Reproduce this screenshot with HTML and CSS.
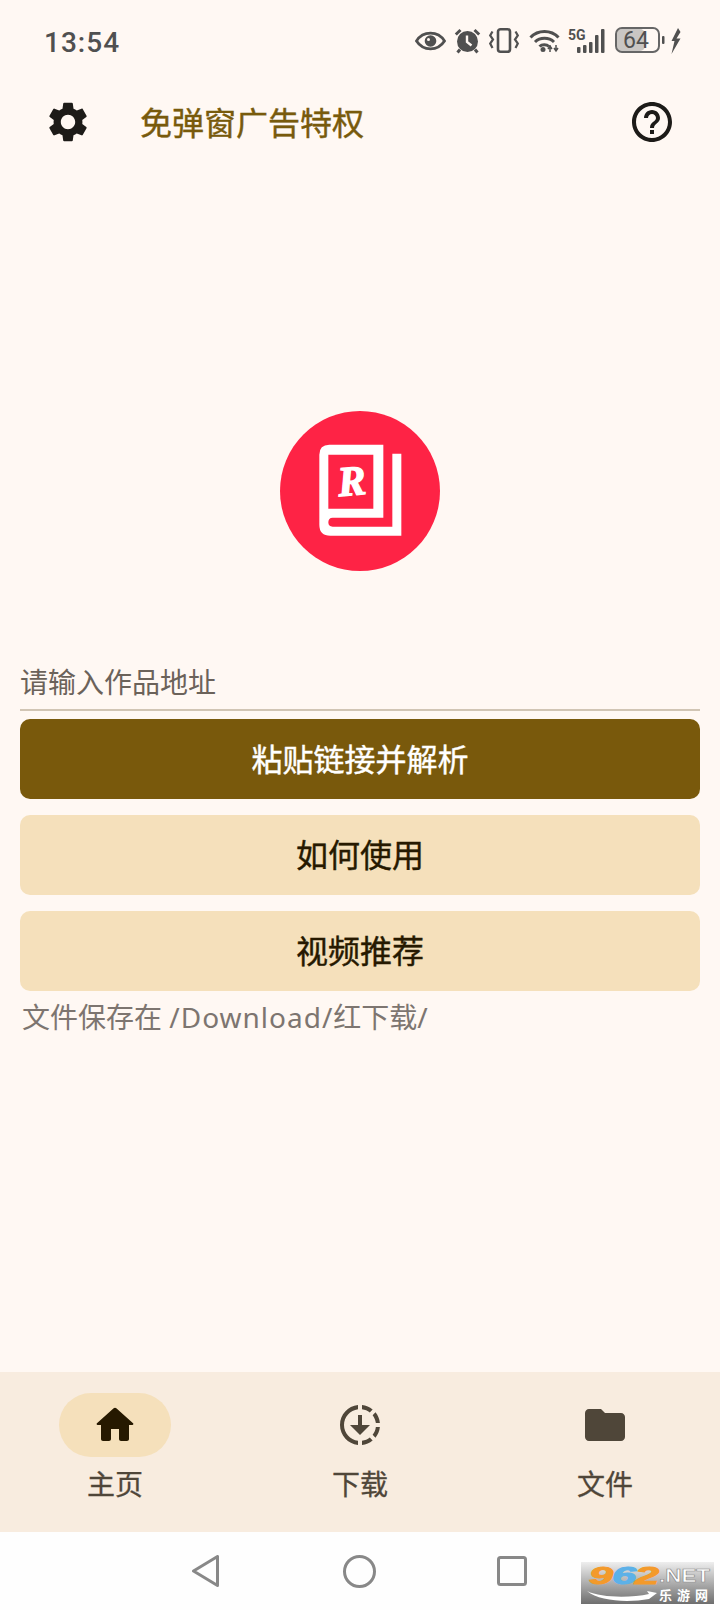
FILE: index.html
```html
<!DOCTYPE html>
<html lang="zh-CN">
<head>
    <meta charset="UTF-8">
    <meta name="viewport" content="width=device-width, initial-scale=1.0">
    <title>免弹窗广告特权</title>
    <link rel="stylesheet" href="styles.css">
</head>
<body>
    <div class="app">
        <div class="status-bar">
            <span class="clock">13:54</span>
            <svg class="status-icons" width="266" height="28" viewBox="0 0 266 28">
                <!-- eye -->
                <g transform="translate(0 5)">
                    <path d="M1.500 9C5 3.500 10 1.200 15.500 1.200S26 3.500 29.500 9C26 14.500 21 16.800 15.500 16.800S5 14.500 1.500 9Z" fill="none" stroke="#505050" stroke-width="2.800"/>
                    <circle cx="15.500" cy="9" r="5.800" fill="#505050"/>
                    <circle cx="13.500" cy="7.500" r="1.500" fill="#fff8f3"/>
                </g>
                <!-- alarm -->
                <g transform="translate(40 2)">
                    <circle cx="12.500" cy="12.500" r="10.500" fill="#505050"/>
                    <path d="M.8 5.500 5.500 1M24.200 5.500 19.500 1M5 20.500 2.500 23.500M20 20.500l2.500 3" stroke="#505050" stroke-width="3" fill="none"/>
                    <path d="M12 6.500v6.500l4.500 3.500" stroke="#fff8f3" stroke-width="2.400" fill="none"/>
                </g>
                <!-- vibrate -->
                <g transform="translate(74 1)">
                    <rect x="9" y="1.300" width="12" height="22.500" rx="2.500" fill="none" stroke="#505050" stroke-width="2.600"/>
                    <path d="M3.500 3.500 1.200 7.500l2.800 4-2.800 4 2.300 4.500M26.500 3.500l2.300 4-2.800 4 2.800 4-2.300 4.500" fill="none" stroke="#505050" stroke-width="2.200"/>
                </g>
                <!-- wifi -->
                <g transform="translate(114 1)">
                    <path d="M1.500 9.500C9 1.500 22 1.500 29.500 9.500M6 14c5-5 14-5 19 0M10.500 18.500c2.500-2.500 7-2.500 9.500 0" fill="none" stroke="#505050" stroke-width="3"/>
                    <circle cx="14" cy="21.500" r="2.500" fill="#505050"/>
                    <path d="M21 17v7M27 17v7M19 21l2-3 2 3M25 20l2 3 2-3" fill="none" stroke="#505050" stroke-width="1.500"/>
                </g>
                <!-- 5G and signal -->
                <g transform="translate(153 2)">
                    <text x="0" y="10.500" class="five-g">5G</text>
                    <rect x="9" y="18" width="3.500" height="6" rx="1" fill="#505050"/>
                    <rect x="15" y="16" width="3.500" height="8" rx="1" fill="#505050"/>
                    <rect x="21" y="13" width="3.500" height="11" rx="1" fill="#505050"/>
                    <rect x="27" y="6" width="3.500" height="18" rx="1" fill="#505050"/>
                    <rect x="33" y="0" width="3.500" height="24" rx="1" fill="#505050"/>
                </g>
                <!-- battery -->
                <rect x="202" y="2" width="28" height="22" rx="5" fill="#c9c6c3"/>
                <rect x="201" y="1" width="43" height="24" rx="6" fill="none" stroke="#666" stroke-width="2"/>
                <rect x="247" y="9" width="2.500" height="8" rx="1" fill="#505050"/>
                <text x="221" y="21" class="battery-level">64</text>
                <!-- charging bolt -->
                <path transform="translate(255 1)" d="M8 0 1.500 13h3L1.500 26 10.500 10.500H6.500L10.500 4Z" fill="#505050"/>
            </svg>
        </div>

        <header class="app-bar">
            <svg class="bar-icon" viewBox="0 0 24 24"><path d="M19.140 12.940c.04-.3.06-.61.06-.94 0-.32-.02-.64-.07-.94l2.030-1.580c.18-.14.23-.41.12-.61l-1.920-3.320c-.12-.22-.37-.29-.59-.22l-2.390.96c-.5-.38-1.030-.7-1.620-.94l-.36-2.540c-.04-.24-.24-.41-.48-.41h-3.840c-.24 0-.43.17-.47.41l-.36 2.540c-.59.24-1.130.57-1.620.94l-2.390-.96c-.22-.08-.47 0-.59.22L2.740 8.870c-.12.21-.08.47.12.61l2.030 1.580c-.05.3-.09.63-.09.94s.02.64.07.94l-2.030 1.580c-.18.14-.23.41-.12.61l1.920 3.320c.12.22.37.29.59.22l2.390-.96c.5.38 1.030.7 1.620.94l.36 2.540c.05.24.24.41.48.41h3.840c.24 0 .44-.17.47-.41l.36-2.540c.59-.24 1.130-.56 1.620-.94l2.390.96c.22.08.47 0 .59-.22l1.920-3.320c.12-.22.07-.47-.12-.61l-2.010-1.580zM12 15.600c-1.980 0-3.600-1.620-3.600-3.600s1.620-3.600 3.600-3.600 3.600 1.620 3.600 3.600-1.620 3.600-3.600 3.600z"/></svg>
            <h1 class="app-title">免弹窗广告特权</h1>
            <svg class="bar-icon" viewBox="0 0 24 24"><path d="M11 18h2v-2h-2v2zm1-16C6.480 2 2 6.480 2 12s4.480 10 10 10 10-4.480 10-10S17.520 2 12 2zm0 18c-4.410 0-8-3.590-8-8s3.590-8 8-8 8 3.590 8 8-3.590 8-8 8zm0-14c-2.210 0-4 1.790-4 4h2c0-1.100.9-2 2-2s2 .9 2 2c0 2-3 1.750-3 5h2c0-2.250 3-2.500 3-5 0-2.210-1.790-4-4-4z"/></svg>
        </header>

        <main class="content">
            <svg class="logo" viewBox="60 64 480 480">
                <circle cx="300" cy="304" r="240" fill="#fe2345"/>
                <path fill="#fff" fill-rule="evenodd" d="M370 165H208Q178 165 178 195V405Q178 438 211 438H424V192H397V411H218Q205 411 205 398Q205 384 218 384H370ZM205 195H340V357H205Z"/>
                <text x="234" y="316" class="logo-letter" transform="rotate(-5 275 280)">R</text>
            </svg>

            <div class="url-field">请输入作品地址</div>
            <div class="actions">
                <button class="btn btn-primary">粘贴链接并解析</button>
                <button class="btn btn-tonal">如何使用</button>
                <button class="btn btn-tonal">视频推荐</button>
            </div>
            <p class="save-path">文件保存在 <span class="path-latin">/Download/</span>红下载/</p>
        </main>

        <nav class="tabs">
            <div class="tab">
                <div class="tab-icon tab-icon-active">
                    <svg viewBox="0 0 24 24" fill="#261900"><path d="M10 19v-5h4v5c0 .55.45 1 1 1h3c.55 0 1-.45 1-1v-7h1.700c.46 0 .68-.57.33-.87L12.670 3.600c-.38-.34-.96-.34-1.340 0l-8.360 7.530c-.34.3-.13.87.33.87H5v7c0 .55.45 1 1 1h3c.55 0 1-.45 1-1z"/></svg>
                </div>
                <span class="tab-label">主页</span>
            </div>
            <div class="tab">
                <div class="tab-icon">
                    <svg viewBox="0 0 24 24" fill="#4f4639"><path d="M18.320 4.260C16.840 3.050 15.010 2.250 13 2.050v2.020c1.460.18 2.790.76 3.900 1.620L18.320 4.260zM19.930 11h2.020c-.2-2.010-1-3.840-2.210-5.320L18.310 7.100C19.170 8.210 19.750 9.540 19.930 11zM18.310 16.900l1.430 1.430c1.210-1.480 2.010-3.320 2.210-5.320h-2.020C19.750 14.460 19.170 15.790 18.310 16.900zM13 19.930v2.020c2.010-.2 3.840-1 5.320-2.210l-1.430-1.430C15.790 19.170 14.460 19.750 13 19.930zM13 12V7h-2v5H7l5 5 5-5H13zM11 19.930v2.020c-5.050-.5-9-4.760-9-9.950s3.950-9.450 9-9.950v2.020C7.050 4.560 4 7.920 4 12S7.050 19.440 11 19.930z"/></svg>
                </div>
                <span class="tab-label">下载</span>
            </div>
            <div class="tab">
                <div class="tab-icon">
                    <svg viewBox="0 0 24 24" fill="#4f4639"><path d="M10 4H4c-1.100 0-1.990.9-1.990 2L2 18c0 1.100.9 2 2 2h16c1.100 0 2-.9 2-2V8c0-1.100-.9-2-2-2h-8l-2-2z"/></svg>
                </div>
                <span class="tab-label">文件</span>
            </div>
        </nav>

        <div class="system-nav">
            <svg width="27" height="32" viewBox="0 0 27 32"><path d="M25.500 1.500V30.500L1.500 16Z" fill="none" stroke="#888" stroke-width="3" stroke-linejoin="round"/></svg>
            <svg width="33" height="33" viewBox="0 0 33 33"><circle cx="16.500" cy="16.500" r="15" fill="none" stroke="#888" stroke-width="3"/></svg>
            <svg width="30" height="30" viewBox="0 0 30 30"><rect x="1.500" y="1.500" width="27" height="27" rx="2" fill="none" stroke="#888" stroke-width="3"/></svg>
        </div>

        <svg class="watermark" width="133" height="42" viewBox="0 0 133 42">
            <defs>
                <linearGradient id="wm-bg" x1="0" y1="0" x2="0" y2="1">
                    <stop offset="0" stop-color="#eeeeee"/>
                    <stop offset="1" stop-color="#6e6e6e"/>
                </linearGradient>
            </defs>
            <rect width="133" height="42" fill="url(#wm-bg)"/>
            <text x="8" y="22" class="wm-num wm-orange" textLength="24" lengthAdjust="spacingAndGlyphs">9</text>
            <text x="31" y="22" class="wm-num wm-blue" textLength="24" lengthAdjust="spacingAndGlyphs">6</text>
            <text x="54" y="22" class="wm-num wm-orange" textLength="24" lengthAdjust="spacingAndGlyphs">2</text>
            <text x="78" y="20" class="wm-net" textLength="51" lengthAdjust="spacingAndGlyphs">.NET</text>
            <text x="78" y="38" class="wm-cn" textLength="49">乐游网</text>
            <path d="M6 29C20 36 50 36 68 32L66 29 76 31 68 37C46 41 18 39 6 29Z" fill="#fff"/>
        </svg>
    </div>
</body>
</html>
```

FILE: styles.css
```css
* {
    box-sizing: border-box;
}

body {
    margin: 0;
    font-family: "Noto Sans", "Noto Sans CJK SC", sans-serif;
    background: #fff8f3;
}

.app {
    position: relative;
    display: flex;
    flex-direction: column;
    height: 1610px;
    width: 720px;
    overflow: hidden;
}

/* status bar */
.status-bar {
    height: 82px;
    padding: 0 39px 0 44px;
    display: flex;
    align-items: center;
    justify-content: space-between;
}

.clock {
    padding-top: 2px;
    font-family: Roboto, sans-serif;
    font-size: 28px;
    font-weight: 500;
    letter-spacing: 1px;
    color: #505050;
}

.five-g {
    font-family: Roboto, sans-serif;
    font-size: 14px;
    font-weight: 700;
    fill: #505050;
}

.battery-level {
    font-family: Roboto, sans-serif;
    font-size: 23px;
    fill: #505050;
    text-anchor: middle;
}

/* top bar */
.app-bar {
    height: 80px;
    padding: 0 44px;
    display: flex;
    align-items: center;
}

.bar-icon {
    width: 48px;
    height: 48px;
    fill: #1d1b18;
    flex: none;
}

.app-title {
    flex: 1;
    margin: 0 0 2px 48px;
    font-size: 32px;
    font-weight: 400;
    -webkit-text-stroke: 0.4px #785a0c;
    color: #785a0c;
}

/* main */
.content {
    flex: 1;
    padding: 249px 20px 0;
    display: flex;
    flex-direction: column;
}

.logo {
    width: 160px;
    height: 160px;
    align-self: center;
    flex: none;
}

.logo-letter {
    font-family: "Liberation Serif", serif;
    font-size: 126px;
    font-weight: 700;
    font-style: italic;
    fill: #fff;
    stroke: #fff;
    stroke-width: 4px;
}

.url-field {
    height: 140px;
    padding-bottom: 5px;
    display: flex;
    align-items: flex-end;
    border-bottom: 2px solid #d1c5b4;
    font-size: 28px;
    line-height: 44px;
    color: #6b625a;
}

.actions {
    margin-top: 8px;
    display: flex;
    flex-direction: column;
    gap: 16px;
}

.btn {
    height: 80px;
    padding: 0 0 4px;
    border: 0;
    border-radius: 10px;
    font-family: inherit;
    font-size: 32px;
    font-weight: 400;
}

.btn-primary {
    background: #79590c;
    color: #fff;
    font-size: 31px;
    -webkit-text-stroke: 0.4px #fff;
}

.btn-tonal {
    background: #f5e0bb;
    color: #261900;
    -webkit-text-stroke: 0.4px #261900;
}

.save-path {
    margin: 7px 0 0 2px;
    font-size: 28px;
    line-height: 38px;
    color: #7d7570;
}

.path-latin {
    letter-spacing: 1px;
}

/* bottom tabs */
.tabs {
    height: 160px;
    padding-top: 21px;
    background: #f8ecdf;
    display: grid;
    grid-template-columns: repeat(3, 230px);
    column-gap: 15px;
}

.tab {
    display: flex;
    flex-direction: column;
    align-items: center;
}

.tab-icon {
    width: 112px;
    height: 64px;
    border-radius: 32px;
    display: flex;
    align-items: center;
    justify-content: center;
}

.tab-icon svg {
    width: 48px;
    height: 48px;
}

.tab-icon-active {
    background: #f5e0bb;
}

.tab-label {
    margin-top: 9px;
    font-size: 28px;
    line-height: 36px;
    -webkit-text-stroke: 0.3px #4f4639;
    color: #4f4639;
}

/* android nav */
.system-nav {
    height: 78px;
    background: #fefefe;
    padding-left: 192px;
    display: flex;
    align-items: center;
    gap: 124px;
}

.system-nav svg:last-child {
    margin-left: -3px;
}

/* watermark sits over the nav bar */
.watermark {
    position: absolute;
    left: 581px;
    top: 1562px;
}

.wm-num {
    font-family: "Liberation Sans", sans-serif;
    font-size: 23.500px;
    font-weight: 700;
    font-style: italic;
    stroke-width: 1px;
}

.wm-orange {
    fill: #f39a2b;
    stroke: #f39a2b;
}

.wm-blue {
    fill: #5cb1e8;
    stroke: #5cb1e8;
}

.wm-net {
    font-family: "Liberation Sans", sans-serif;
    font-size: 18px;
    font-weight: 700;
    fill: #fff;
    stroke: #8a8a8a;
    stroke-width: 0.6px;
}

.wm-cn {
    font-family: "Noto Sans CJK SC", sans-serif;
    font-size: 13px;
    font-weight: 700;
    fill: #fff;
}
```
